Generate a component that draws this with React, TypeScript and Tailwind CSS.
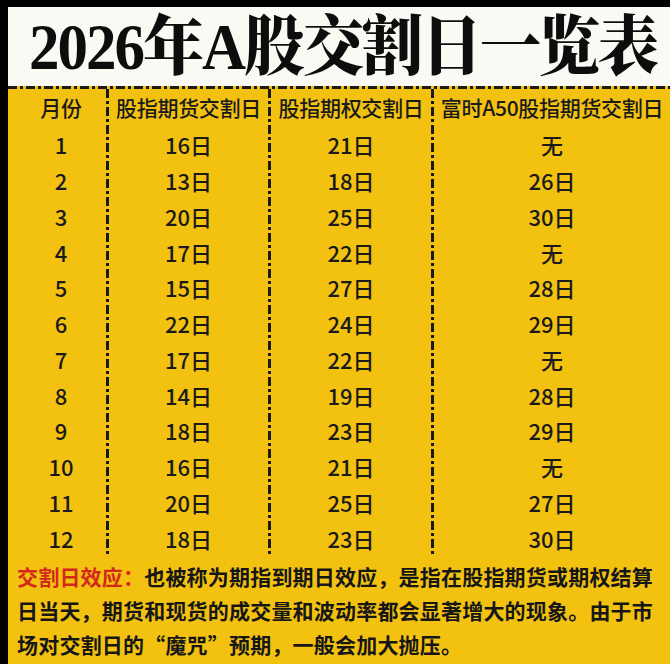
import React from 'react';

const rows = [
  { m: '1', a: '16日', b: '21日', c: '无' },
  { m: '2', a: '13日', b: '18日', c: '26日' },
  { m: '3', a: '20日', b: '25日', c: '30日' },
  { m: '4', a: '17日', b: '22日', c: '无' },
  { m: '5', a: '15日', b: '27日', c: '28日' },
  { m: '6', a: '22日', b: '24日', c: '29日' },
  { m: '7', a: '17日', b: '22日', c: '无' },
  { m: '8', a: '14日', b: '19日', c: '28日' },
  { m: '9', a: '18日', b: '23日', c: '29日' },
  { m: '10', a: '16日', b: '21日', c: '无' },
  { m: '11', a: '20日', b: '25日', c: '27日' },
  { m: '12', a: '18日', b: '23日', c: '30日' },
];

const cjk = { fontFamily: '"Noto Sans CJK SC", "Noto Sans", sans-serif' };

// dash-dot divider running down between the columns
const VLine = () => (
  <div className="w-[3px] shrink-0 bg-[repeating-linear-gradient(to_bottom,#1a1a1a_0px,#1a1a1a_9px,transparent_9px,transparent_12px,#1a1a1a_12px,#1a1a1a_15px,transparent_15px,transparent_18px)]" />
);

const Column = ({ title, cells, className }: { title: string; cells: string[]; className: string }) => (
  <div className={`flex flex-col ${className}`}>
    <div className="h-[38px] flex items-center justify-center text-[21px] font-medium text-[#1a1a1a] whitespace-nowrap tracking-[-0.3px]">
      {title}
    </div>
    {cells.map((c, i) => (
      <div key={i} className="h-[35.75px] flex items-center justify-center text-[22px] font-medium text-[#1a1a1a]">
        {c}
      </div>
    ))}
  </div>
);

export default function App() {
  return (
    <div className="w-[670px] h-[664px] bg-black pl-[8px] pt-[7px] flex flex-col overflow-hidden" style={cjk}>
      {/* title */}
      <div className="h-[79px] shrink-0 bg-[#faf9f3] flex items-center justify-center pt-[2px] pl-[8px]">
        <h1
          className="text-[61px] font-black leading-none tracking-[-2px] text-[#0d0d0d] whitespace-nowrap scale-y-[1.06]"
          style={{ fontFamily: '"Liberation Serif", "Noto Serif CJK SC", "Noto Sans CJK SC", serif' }}
        >
          2026年A股交割日一览表
        </h1>
      </div>

      <div className="flex-1 bg-[#f3c211] flex flex-col">
        <div className="h-[3px] bg-[repeating-linear-gradient(to_right,#1a1a1a_0px,#1a1a1a_9px,transparent_9px,transparent_12px,#1a1a1a_12px,#1a1a1a_15px,transparent_15px,transparent_18px)]" />

        <div className="flex">
          <Column title="月份" cells={rows.map(r => r.m)} className="w-[98px] pl-[8px]" />
          <VLine />
          <Column title="股指期货交割日" cells={rows.map(r => r.a)} className="w-[159px]" />
          <VLine />
          <Column title="股指期权交割日" cells={rows.map(r => r.b)} className="w-[160px]" />
          <VLine />
          <Column title="富时A50股指期货交割日" cells={rows.map(r => r.c)} className="flex-1" />
        </div>

        <p className="pl-[9px] pt-[3px] text-[21px] font-bold leading-[34px] tracking-[0.2px] text-[#161616] whitespace-nowrap">
          <span className="text-[#d2281b]">交割日效应：</span>也被称为期指到期日效应，是指在股指期货或期权结算
          <br />
          日当天，期货和现货的成交量和波动率都会显著增大的现象。由于市
          <br />
          场对交割日的“魔咒”预期，一般会加大抛压。
        </p>
      </div>
    </div>
  );
}
